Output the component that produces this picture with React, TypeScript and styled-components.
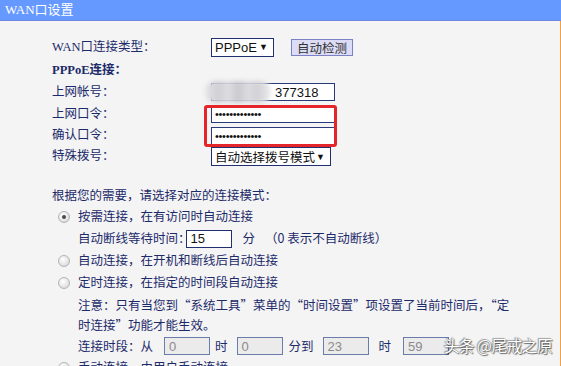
import styled, { createGlobalStyle } from "styled-components";

const GlobalStyle = createGlobalStyle`
  html, body {
    margin: 0;
    padding: 0;
    background: #f4f4f4;
  }
  body {
    font-family: "Noto Sans CJK SC", sans-serif;
  }
`;

const Page = styled.div`
  width: 561px;
  height: 366px;
  overflow: hidden;
  position: relative;
  background: #f4f4f4;
  display: flex;
  flex-direction: column;
`;

const Header = styled.div`
  height: 20px;
  flex-shrink: 0;
  background: #6699ff;
  border-bottom: 1px solid #7088dc;
  color: #fff;
  font: 13px/20px "Liberation Serif", "Noto Sans CJK SC", serif;
  padding-left: 5px;
`;

const Body = styled.div`
  flex: 1;
  border-right: 1px solid #f4a040;
  padding: 14px 0 0 52px;
  color: #1c2a6a;
  font: 12.5px/1 "Liberation Serif", "Noto Sans CJK SC", serif;
`;

const FormGrid = styled.div`
  display: grid;
  grid-template-columns: 159px 160px;
  grid-template-rows: 24px 22px 22px 22px 21px 21px;
  align-items: center;
`;

const Label = styled.div<{ $row: number; $bold?: boolean }>`
  grid-column: 1;
  grid-row: ${(p) => p.$row};
  font-weight: ${(p) => (p.$bold ? 700 : 400)};
  white-space: nowrap;
`;

const Cell = styled.div<{ $row: number }>`
  grid-column: 2;
  grid-row: ${(p) => p.$row};
  display: flex;
  align-items: center;
`;

const SelectBox = styled.div<{ $w: number }>`
  box-sizing: border-box;
  width: ${(p) => p.$w}px;
  height: 19px;
  border: 1px solid #1f2f6f;
  background: #fff;
  color: #111;
  display: flex;
  align-items: center;
  justify-content: space-between;
  padding: 0 5px 0 3px;
  font: 13px "Liberation Sans", "Noto Sans CJK SC", sans-serif;
`;

const SelectText = styled.span`
  font: 12.5px "Noto Sans CJK SC", sans-serif;
`;

const Arrow = styled.span`
  font-size: 9px;
  color: #111;
`;

const DetectButton = styled.div`
  box-sizing: border-box;
  margin-left: 17px;
  width: 62px;
  height: 17px;
  background: #dcdcf6;
  border: 1px solid #7c80c4;
  color: #333;
  display: flex;
  align-items: center;
  justify-content: center;
  font: 12.5px "Noto Sans CJK SC", sans-serif;
`;

const TextInput = styled.div<{ $pad?: number }>`
  box-sizing: border-box;
  width: 124px;
  height: 18px;
  border: 1px solid #2a3a7a;
  background: #fff;
  color: #111;
  display: flex;
  align-items: center;
  padding-left: ${(p) => p.$pad ?? 3}px;
  font: 13px "Liberation Sans", sans-serif;
`;

const Dots = styled.span`
  font: 11px "Liberation Sans", sans-serif;
  letter-spacing: -0.3px;
`;

const Blur = styled.div`
  grid-column: 2;
  grid-row: 3;
  justify-self: start;
  margin-left: -6px;
  width: 66px;
  height: 22px;
  border-radius: 10px;
  background: linear-gradient(
    90deg,
    #e4e4e8 0%,
    #cfcfd4 20%,
    #dedee2 35%,
    #cacace 50%,
    #dcdce0 65%,
    #d2d2d6 80%,
    #ececee 100%
  );
  filter: blur(2px);
  z-index: 1;
`;

const Highlight = styled.div`
  grid-column: 2;
  grid-row: 4 / span 2;
  justify-self: start;
  align-self: stretch;
  box-sizing: border-box;
  margin: 2px 0 -1px -7px;
  width: 133px;
  border: 3px solid #e4262b;
  border-radius: 3px;
  z-index: 2;
`;

const Modes = styled.div`
  margin-top: 17px;
  display: flex;
  flex-direction: column;
  font-family: "Noto Sans CJK SC", sans-serif;
`;

const Line = styled.div<{ $h: number; $indent: number }>`
  height: ${(p) => p.$h}px;
  padding-left: ${(p) => p.$indent}px;
  display: flex;
  align-items: center;
  white-space: nowrap;
`;

const Radio = styled.span<{ $checked?: boolean }>`
  box-sizing: border-box;
  width: 12px;
  height: 12px;
  margin-right: 8px;
  border-radius: 50%;
  border: 1px solid #b4b4b4;
  background: radial-gradient(circle at 40% 35%, #ffffff 0%, #e6e6e6 55%, #cfcfcf 100%);
  display: flex;
  align-items: center;
  justify-content: center;
  &::after {
    content: "";
    width: 4px;
    height: 4px;
    border-radius: 50%;
    background: ${(p) => (p.$checked ? "#4a4a4a" : "transparent")};
  }
`;

const SmallInput = styled.div<{ $disabled?: boolean; $ml: number }>`
  box-sizing: border-box;
  width: 46px;
  height: 18px;
  margin-left: ${(p) => p.$ml}px;
  border: 1px solid ${(p) => (p.$disabled ? "#6a7caa" : "#1f2f6f")};
  background: ${(p) => (p.$disabled ? "#ebebeb" : "#fff")};
  color: ${(p) => (p.$disabled ? "#8a8a8a" : "#111")};
  display: flex;
  align-items: center;
  padding-left: 4px;
  font: 13px "Liberation Sans", sans-serif;
`;

const Gap = styled.span<{ $ml: number }>`
  margin-left: ${(p) => p.$ml}px;
`;

const Watermark = styled.div`
  position: absolute;
  right: 9px;
  bottom: 9px;
  color: #fff;
  font: 16px "Noto Sans CJK SC", sans-serif;
  letter-spacing: -0.8px;
  text-shadow: 0 0 1px #444, 1px 1px 1px rgba(0, 0, 0, 0.55), -1px -1px 1px rgba(0, 0, 0, 0.3);
  z-index: 3;
`;

export default function App() {
  return (
    <Page>
      <GlobalStyle />
      <Header>WAN口设置</Header>
      <Body>
        <FormGrid>
          <Label $row={1}>WAN口连接类型：</Label>
          <Cell $row={1}>
            <SelectBox $w={63}>
              PPPoE <Arrow>▼</Arrow>
            </SelectBox>
            <DetectButton>自动检测</DetectButton>
          </Cell>

          <Label $row={2} $bold>
            PPPoE连接：
          </Label>

          <Label $row={3}>上网帐号：</Label>
          <Cell $row={3}>
            <TextInput $pad={63}>377318</TextInput>
          </Cell>
          <Blur />

          <Label $row={4}>上网口令：</Label>
          <Cell $row={4}>
            <TextInput>
              <Dots>•••••••••••••</Dots>
            </TextInput>
          </Cell>

          <Label $row={5}>确认口令：</Label>
          <Cell $row={5}>
            <TextInput>
              <Dots>•••••••••••••</Dots>
            </TextInput>
          </Cell>
          <Highlight />

          <Label $row={6}>特殊拨号：</Label>
          <Cell $row={6}>
            <SelectBox $w={120}>
              <SelectText>自动选择拨号模式</SelectText>
              <Arrow>▼</Arrow>
            </SelectBox>
          </Cell>
        </FormGrid>

        <Modes>
          <Line $h={22} $indent={0}>
            根据您的需要，请选择对应的连接模式：
          </Line>
          <Line $h={21} $indent={6}>
            <Radio $checked />
            按需连接，在有访问时自动连接
          </Line>
          <Line $h={23} $indent={26}>
            自动断线等待时间：
            <SmallInput $ml={-5}>15</SmallInput>
            <Gap $ml={11}>分</Gap>
            <Gap $ml={10}>（0 表示不自动断线）</Gap>
          </Line>
          <Line $h={21} $indent={6}>
            <Radio />
            自动连接，在开机和断线后自动连接
          </Line>
          <Line $h={23} $indent={6}>
            <Radio />
            定时连接，在指定的时间段自动连接
          </Line>
          <Line $h={22} $indent={26}>
            注意：只有当您到“系统工具”菜单的“时间设置”项设置了当前时间后，“定
          </Line>
          <Line $h={19} $indent={26}>
            时连接”功能才能生效。
          </Line>
          <Line $h={22} $indent={26}>
            连接时段：从
            <SmallInput $disabled $ml={11}>0</SmallInput>
            <Gap $ml={5}>时</Gap>
            <SmallInput $disabled $ml={9}>0</SmallInput>
            <Gap $ml={6}>分到</Gap>
            <SmallInput $disabled $ml={9}>23</SmallInput>
            <Gap $ml={10}>时</Gap>
            <SmallInput $disabled $ml={12}>59</SmallInput>
          </Line>
          <Line $h={21} $indent={6}>
            <Radio />
            手动连接，由用户手动连接
          </Line>
        </Modes>
      </Body>
      <Watermark>头条 @尾戒之原</Watermark>
    </Page>
  );
}
